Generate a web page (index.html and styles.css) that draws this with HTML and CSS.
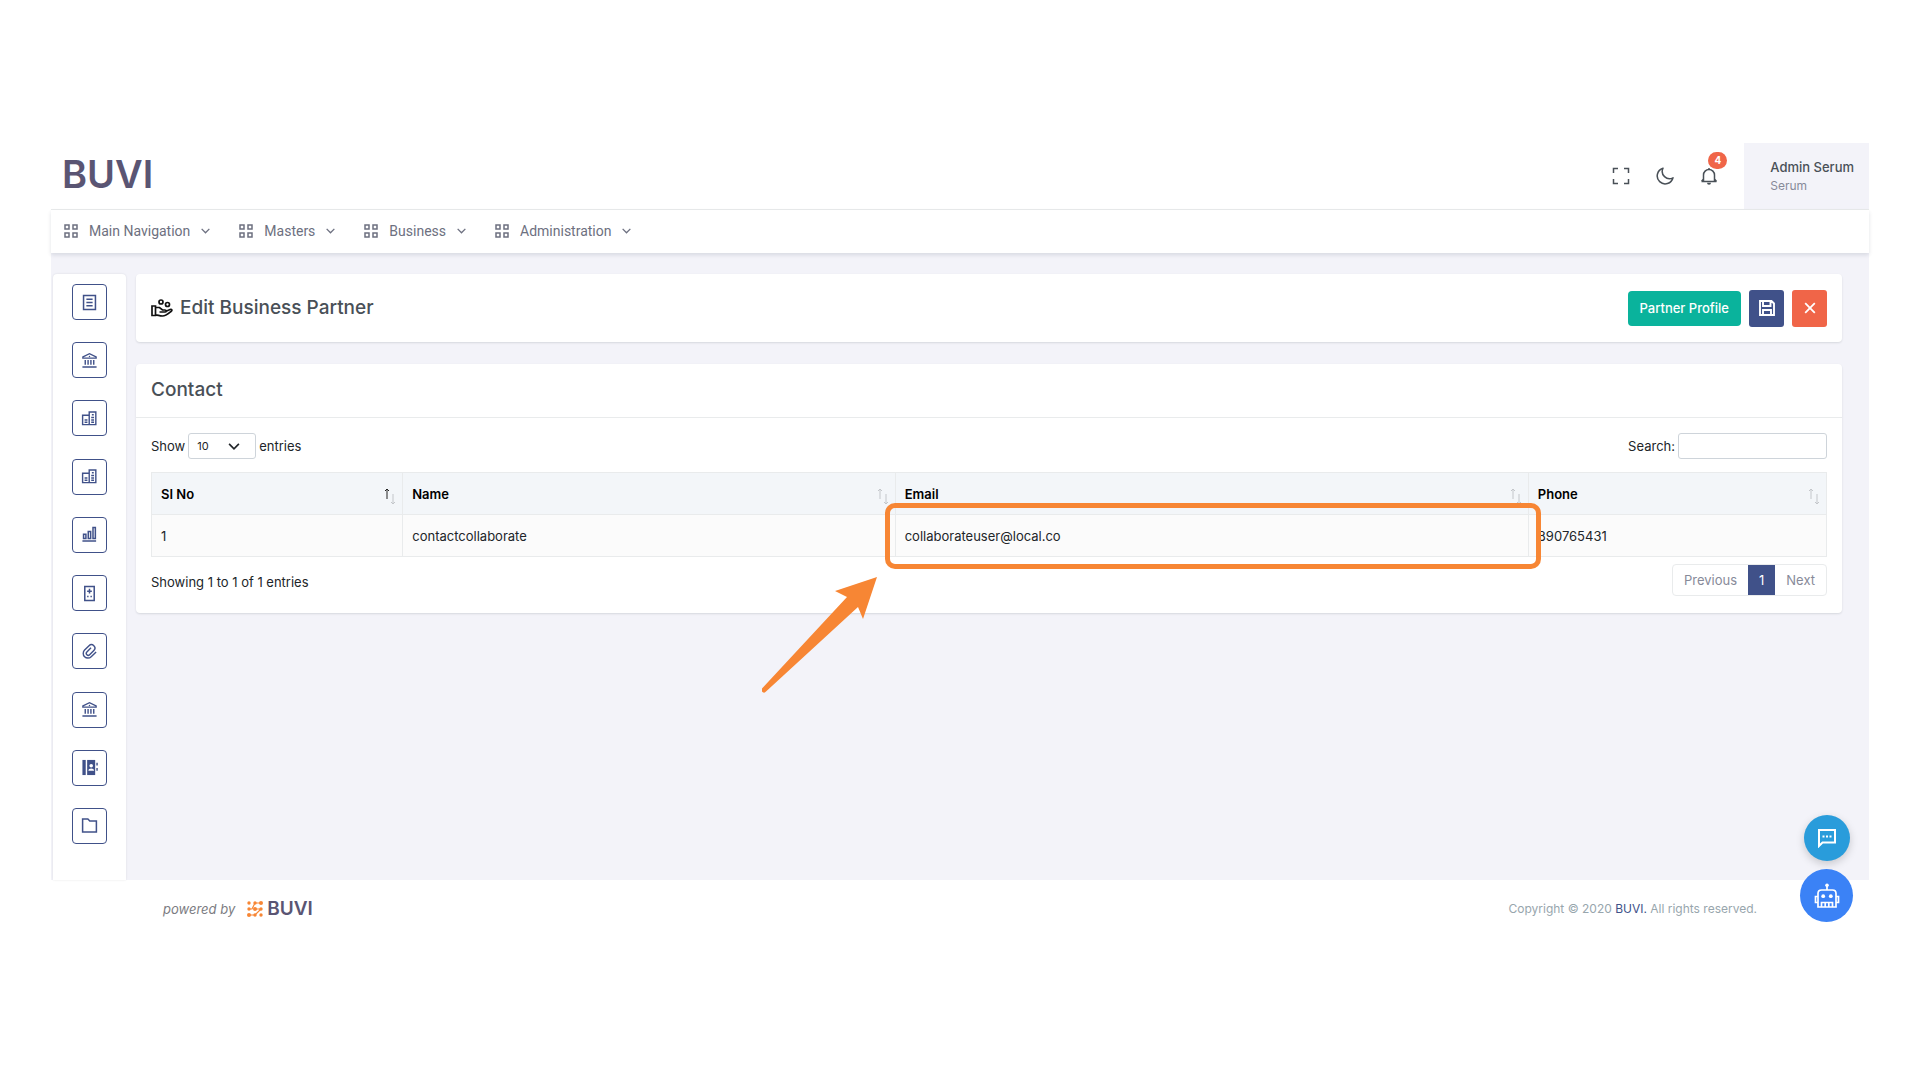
FILE: index.html
```
<!DOCTYPE html>
<html lang="en">
<head>
    <meta charset="UTF-8">
    <meta name="viewport" content="width=device-width, initial-scale=1.0">
    <title>BUVI - Edit Business Partner</title>
    <link rel="stylesheet" href="styles.css">
</head>
<body>
    <!-- shared icons -->
    <svg class="sprite" aria-hidden="true">
        <symbol id="i-grid" viewBox="0 0 14 14"><path d="M1 1h4v4H1zM9 1h4v4H9zM1 9h4v4H1zM9 9h4v4H9z" fill="none" stroke="currentColor" stroke-width="1.5"/></symbol>
        <symbol id="i-down" viewBox="0 0 10 10"><path d="M1.5 3.5L5 7l3.500-3.500" fill="none" stroke="currentColor" stroke-width="1.200"/></symbol>
        <symbol id="i-bank" viewBox="0 0 18 18"><path d="M2 6.500V5.200L9 1.800l7 3.400v1.300zM4.500 8.500v5M7.500 8.500v5M10.500 8.500v5M13.500 8.500v5M1.500 15.800h15" fill="none" stroke="currentColor" stroke-width="1.500"/><circle cx="9" cy="4.800" r=".8" fill="currentColor"/></symbol>
        <symbol id="i-building" viewBox="0 0 18 18"><path d="M1.700 15.500V5.500h7v10zM8.700 15.500V2.200h7v13.300zM3.800 10.500h3M3.800 13h3M10.800 8h3M10.800 10.500h3M10.800 13h3M11.500 5h2" fill="none" stroke="currentColor" stroke-width="1.500"/></symbol>
        <symbol id="i-sort" viewBox="0 0 12 18"><path class="up" d="M3 12V2M1 4l2-2 2 2" /><path class="dn" d="M9 7v10M7 15l2 2 2-2"/></symbol>
    </svg>

    <div class="app">
        <header class="topbar">
            <a class="logo" href="#">BUVI</a>
            <div class="topbar-right">
                <button class="icon-btn" aria-label="Fullscreen">
                    <svg viewBox="0 0 18 18"><path d="M1.500 6V1.500H6M12 1.500h4.500V6M16.500 12v4.500H12M6 16.500H1.500V12" fill="none" stroke="currentColor" stroke-width="1.500"/></svg>
                </button>
                <button class="icon-btn" aria-label="Dark mode">
                    <svg viewBox="0 0 18 18"><path d="M7 1.200A8 8 0 1 0 17 10.800 7.300 7.300 0 0 1 7 1.200z" fill="none" stroke="currentColor" stroke-width="1.500" stroke-linejoin="round"/></svg>
                </button>
                <button class="icon-btn" aria-label="Notifications">
                    <svg viewBox="0 0 18 18"><path d="M1.500 14.500h15M3.500 14V8a5.500 5.500 0 0 1 11 0v6M1.500 14.500l2-2.500M16.500 14.500l-2-2.500M9 1v1.500" fill="none" stroke="currentColor" stroke-width="1.500"/><path d="M7 15.800h4a2 2 0 0 1-4 0z" fill="currentColor"/></svg>
                    <span class="badge">4</span>
                </button>
                <div class="user">
                    <span class="user-name">Admin Serum</span>
                    <span class="user-role">Serum</span>
                </div>
            </div>
        </header>

        <nav class="navbar">
            <a href="#"><svg class="grid"><use href="#i-grid"/></svg>Main Navigation<svg class="down"><use href="#i-down"/></svg></a>
            <a href="#"><svg class="grid"><use href="#i-grid"/></svg>Masters<svg class="down"><use href="#i-down"/></svg></a>
            <a href="#"><svg class="grid"><use href="#i-grid"/></svg>Business<svg class="down"><use href="#i-down"/></svg></a>
            <a href="#"><svg class="grid"><use href="#i-grid"/></svg>Administration<svg class="down"><use href="#i-down"/></svg></a>
        </nav>

        <div class="page">
            <aside class="sidebar">
                <button aria-label="Details"><svg viewBox="0 0 18 18"><path d="M2.700 1.700h12.600v14.600H2.700zM5.700 5.500h6.600M5.700 9h6.600M5.700 12.500h6.600" fill="none" stroke="currentColor" stroke-width="1.600"/></svg></button>
                <button aria-label="Bank"><svg><use href="#i-bank"/></svg></button>
                <button aria-label="Company"><svg><use href="#i-building"/></svg></button>
                <button aria-label="Branch"><svg><use href="#i-building"/></svg></button>
                <button aria-label="Statistics"><svg viewBox="0 0 18 18"><path d="M2.700 8.700h2.500v4.600H2.700zM7.700 5.700h2.500v7.600H7.700zM12.700 1.700h2.500v11.600h-2.500zM1.500 16h14.500" fill="none" stroke="currentColor" stroke-width="1.600"/></svg></button>
                <button aria-label="Tax"><svg viewBox="0 0 18 18"><path d="M4 1.700h10v14.600H4zM9 4v5M6.500 6.500h5M6.500 12.300h1.500M10 12.300h1.500" fill="none" stroke="currentColor" stroke-width="1.600"/></svg></button>
                <button aria-label="Attachments"><svg viewBox="0 0 18 18"><path d="M16 9.500l-5.200 5a4.900 4.900 0 0 1-7-7l4.700-4.700a3.600 3.600 0 0 1 5.100 5.100l-4.500 4.500a2 2 0 0 1-2.900-2.900l4.400-4.400" fill="none" stroke="currentColor" stroke-width="1.500"/></svg></button>
                <button aria-label="Bank accounts"><svg><use href="#i-bank"/></svg></button>
                <button aria-label="Contacts"><svg viewBox="0 0 18 18"><path d="M1.500 1h3.500v16H1.500z" fill="currentColor"/><path d="M6.500 1H15v16H6.500z" fill="currentColor"/><path d="M17 4v3M17 9.500v3" stroke="currentColor" stroke-width="1.500"/><circle cx="10.800" cy="7.200" r="1.900" fill="#fff"/><path d="M7.800 12.500c0-3.400 6-3.400 6 0z" fill="#fff"/></svg></button>
                <button aria-label="Documents"><svg viewBox="0 0 18 18"><path d="M1.700 2.200h5.600l2 2h7v11.600H1.700z" fill="none" stroke="currentColor" stroke-width="1.600"/></svg></button>
            </aside>

            <main class="content">
                <section class="card title-card">
                    <h1>
                        <svg viewBox="0 0 22 18"><g fill="none" stroke="currentColor" stroke-width="1.700"><circle cx="10" cy="3" r="2"/><circle cx="16.500" cy="5.500" r="2"/><path d="M1 7h3.500v9.500H1zM4.500 8.500h4l3 2.500h2.500c1.500 0 1.500 2 0 2H8.500M14.500 12.500l4.500-2c2-.5 2.500 1 1 2-3 2.500-5 4.500-8.500 4.500-3.500 0-4-1-7-1.200"/></g></svg>
                        Edit Business Partner
                    </h1>
                    <div class="actions">
                        <button class="btn btn-green">Partner Profile</button>
                        <button class="btn btn-icon btn-blue" aria-label="Save"><svg viewBox="0 0 16 16"><path d="M1 1h11.500L15 3.500V15H1zM4 1v5h7.500V1M4 15v-5h8v5" fill="none" stroke="currentColor" stroke-width="1.900"/></svg></button>
                        <button class="btn btn-icon btn-red" aria-label="Close"><svg viewBox="0 0 16 16"><path d="M3.200 3.200l9.600 9.600M12.800 3.200l-9.600 9.600" stroke="currentColor" stroke-width="1.800"/></svg></button>
                    </div>
                </section>

                <section class="card">
                    <h2>Contact</h2>
                    <div class="card-body">
                        <div class="table-tools">
                            <div class="field">
                                <label for="length">Show</label>
                                <span class="select-wrap">
                                    <select id="length"><option>10</option><option>25</option><option>50</option></select>
                                    <svg><use href="#i-down"/></svg>
                                </span>
                                <span>entries</span>
                            </div>
                            <div class="field">
                                <label for="search">Search:</label>
                                <input id="search" type="search">
                            </div>
                        </div>
                        <table>
                            <thead>
                                <tr>
                                    <th class="col-no asc"><div>SI No<svg><use href="#i-sort"/></svg></div></th>
                                    <th class="col-name"><div>Name<svg><use href="#i-sort"/></svg></div></th>
                                    <th class="col-email"><div>Email<svg><use href="#i-sort"/></svg></div></th>
                                    <th class="col-phone"><div>Phone<svg><use href="#i-sort"/></svg></div></th>
                                </tr>
                            </thead>
                            <tbody>
                                <tr>
                                    <td>1</td>
                                    <td>contactcollaborate</td>
                                    <td class="marked">
                                        collaborateuser@local.co
                                        <span class="highlight"></span>
                                        <svg class="arrow" viewBox="0 0 116 118"><path d="M115 0L101 42 96 30 4 114.500A2.300 2.300 0 0 1 0 111.500L85 20 73 14z" fill="#f78634"/></svg>
                                    </td>
                                    <td>890765431</td>
                                </tr>
                            </tbody>
                        </table>
                        <div class="table-foot">
                            <span>Showing 1 to 1 of 1 entries</span>
                            <div class="pagination">
                                <button>Previous</button>
                                <button class="active">1</button>
                                <button>Next</button>
                            </div>
                        </div>
                    </div>
                </section>
            </main>
        </div>

        <footer class="footer">
            <div class="powered">
                <em>powered by</em>
                <svg viewBox="0 0 16 16"><g fill="#f78634"><circle cx="2" cy="2" r="1.700"/><circle cx="8" cy="2" r="1.700"/><circle cx="14" cy="2" r="2"/><circle cx="2" cy="8" r="1.700"/><circle cx="8" cy="8" r="2"/><circle cx="14" cy="8" r="1.700"/><circle cx="2" cy="14" r="2"/><circle cx="8" cy="14" r="1.700"/><circle cx="14" cy="14" r="1.700"/></g><path d="M8 2h6M2 8h3l3-6M2 14h6l6-6M8 8h6" stroke="#f78634" stroke-width="1.200" fill="none"/></svg>
                <strong>BUVI</strong>
            </div>
            <p>Copyright © 2020 <a href="#">BUVI.</a> All rights reserved.</p>
        </footer>

        <div class="floating">
            <button class="chat" aria-label="Chat"><svg viewBox="0 0 20 20"><path d="M2 18V2h16v12.500H5.500z" fill="none" stroke="currentColor" stroke-width="2"/><path d="M5.500 7.500h2v2h-2zM9 7.500h2v2H9zM12.500 7.500h2v2h-2z" fill="currentColor"/></svg></button>
            <button class="bot" aria-label="Assistant"><svg viewBox="0 0 26 26"><path d="M4 24V10.500C4 8.500 5.500 7 7.500 7h11c2 0 3.500 1.500 3.500 3.500V24zM13 7V3M4 13.500H1.500v6H4M22 13.500h2.500v6H22M7.500 24v-4.500h11V24M11.200 20v3.500M14.800 20v3.500" fill="none" stroke="currentColor" stroke-width="1.700"/><circle cx="13" cy="2.300" r="1.800" fill="currentColor"/><circle cx="9.200" cy="13.200" r="1.900" fill="currentColor"/><circle cx="16.800" cy="13.200" r="1.900" fill="currentColor"/></svg></button>
        </div>
    </div>
</body>
</html>
```

FILE: styles.css
```
* {
    box-sizing: border-box;
}
body {
    margin: 0;
    background: #fff;
    color: #212529;
    font-family: Inter, "Noto Sans", sans-serif;
    font-size: 13px;
    line-height: 20px;
}
button, input, select {
    font: inherit;
    color: inherit;
}
button {
    padding: 0;
    border: none;
    background: none;
    cursor: pointer;
}
svg {
    display: block;
    flex: none;
}
a {
    text-decoration: none;
}
.sprite {
    position: absolute;
    width: 0;
    height: 0;
}
.app {
    position: relative;
    margin: 143px 51px;
}

/* top bar */
.topbar {
    display: flex;
    align-items: center;
    justify-content: space-between;
    height: 67px;
    padding-left: 11px;
    border-bottom: 1px solid #e9ebec;
}
.logo {
    padding-bottom: 4px;
    color: #5a5573;
    font-size: 38px;
    font-weight: 600;
    line-height: 40px;
}
.topbar-right {
    display: flex;
    align-items: center;
    align-self: stretch;
    gap: 26px;
}
.icon-btn {
    position: relative;
    color: #495057;
}
.icon-btn svg {
    width: 18px;
    height: 18px;
}
.badge {
    position: absolute;
    top: -15px;
    left: 8px;
    width: 19px;
    border-radius: 9px;
    background: #f06548;
    color: #fff;
    font-size: 10px;
    font-weight: 700;
    line-height: 17px;
}
.user {
    display: flex;
    flex-direction: column;
    justify-content: center;
    align-self: stretch;
    padding: 0 15px 0 26px;
    background: #f3f3f9;
}
.user-name {
    color: #495057;
    font-weight: 500;
    line-height: 19px;
}
.user-role {
    color: #878a99;
    font-size: 12px;
    line-height: 18px;
}

/* navigation */
.navbar {
    position: relative;
    display: flex;
    align-items: center;
    gap: 28px;
    height: 43px;
    padding: 0 13px 2px;
    background: #fff;
    box-shadow: 0 2px 4px rgba(15, 34, 58, .12);
}
.navbar a {
    display: flex;
    align-items: center;
    color: #6d7080;
    font-family: Roboto, sans-serif;
    font-size: 14px;
}
.navbar .grid {
    width: 14px;
    height: 14px;
    margin-right: 11px;
}
.navbar .down {
    width: 11px;
    height: 11px;
    margin-left: 10px;
}

/* page */
.page {
    display: flex;
    gap: 10px;
    min-height: 627px;
    padding: 21px 27px 0 2px;
    background: #f3f3f9;
}
.sidebar {
    display: flex;
    flex-direction: column;
    align-items: center;
    justify-content: space-between;
    flex: none;
    width: 73px;
    padding: 10px 0 36px;
    border-radius: 4px 4px 0 0;
    background: #fff;
    box-shadow: 0 0 2px rgba(56, 65, 74, .15);
}
.sidebar button {
    display: flex;
    align-items: center;
    justify-content: center;
    width: 35px;
    height: 36px;
    border: 1px solid #405189;
    border-radius: 4px;
    color: #405189;
}
.sidebar svg {
    width: 17px;
    height: 17px;
}
.content {
    flex: 1;
    min-width: 0;
}
.card {
    margin-bottom: 22px;
    border-radius: 4px;
    background: #fff;
    box-shadow: 0 1px 2px rgba(56, 65, 74, .15);
}
.title-card {
    display: flex;
    align-items: center;
    justify-content: space-between;
    height: 68px;
    padding: 0 15px;
}
h1, h2 {
    margin: 0;
    color: #495057;
    font-size: 19px;
    font-weight: 500;
}
h1 {
    display: flex;
    align-items: center;
    gap: 7px;
}
h1 svg {
    width: 22px;
    height: 18px;
    color: #111;
}
h2 {
    padding: 16px 15px 17px;
    border-bottom: 1px solid #e9ebec;
}
.actions {
    display: flex;
    align-items: center;
    gap: 8px;
}
.btn {
    height: 35px;
    padding: 0 12px;
    border-radius: 4px;
    color: #fff;
    font-size: 13px;
    font-weight: 500;
}
.btn-icon {
    display: flex;
    align-items: center;
    justify-content: center;
    width: 35px;
    height: 37px;
    padding: 0;
    border-radius: 3px;
}
.btn-icon svg {
    width: 16px;
    height: 16px;
}
.btn-green {
    background: #0ab39c;
}
.btn-blue {
    background: #405189;
}
.btn-red {
    background: #f06548;
}

/* table */
.card-body {
    padding: 15px 15px 17px;
}
.table-tools, .table-foot {
    display: flex;
    justify-content: space-between;
}
.table-tools {
    margin-bottom: 13px;
}
.field {
    display: flex;
    align-items: center;
    gap: 3px;
}
.select-wrap {
    position: relative;
}
.field select, .field input {
    display: block;
    height: 26px;
    border: 1px solid #ced4da;
    border-radius: 3px;
    background: #fff;
}
.field select {
    width: 68px;
    padding: 0 8px;
    appearance: none;
    font-size: 11px;
}
.select-wrap svg {
    position: absolute;
    top: 6px;
    right: 15px;
    width: 14px;
    height: 14px;
    pointer-events: none;
}
.field input {
    width: 149px;
}
table {
    width: 100%;
    border-collapse: collapse;
    table-layout: fixed;
}
th, td {
    height: 42px;
    padding: 0 9px;
    border: 1px solid #e9ebec;
    text-align: left;
}
th {
    padding-right: 6px;
    background: #f3f6f9;
    color: #000;
    font-weight: 600;
}
th div {
    display: flex;
    align-items: center;
    justify-content: space-between;
}
th svg {
    width: 12px;
    height: 18px;
    margin-top: 4px;
    color: #c3c6ca;
    fill: none;
    stroke: #c3c6ca;
}
.asc svg {
    color: #222;
}
.up {
    stroke: currentColor;
}
td {
    background: #fbfbfb;
}
.col-no {
    width: 15%;
}
.col-name {
    width: 29.4%;
}
.col-email {
    width: 37.8%;
}
.marked {
    position: relative;
}
.highlight {
    position: absolute;
    inset: -12px -13px -13px -11px;
    border: 5px solid #f78634;
    border-radius: 10px;
}
.arrow {
    position: absolute;
    top: 62px;
    left: -134px;
    width: 116px;
    height: 118px;
}
.table-foot {
    padding-top: 7px;
}
.table-foot > span {
    padding-top: 8px;
}
.pagination {
    display: flex;
    border: 1px solid #e9ebec;
    border-radius: 4px;
}
.pagination button {
    height: 30px;
    padding: 0 11px;
    color: #878a99;
}
.pagination .active {
    background: #405189;
    color: #fff;
}

/* footer */
.footer {
    display: flex;
    align-items: center;
    justify-content: space-between;
    height: 57px;
    padding: 0 112px;
    color: #98a6ad;
}
.powered {
    display: flex;
    align-items: center;
    color: #7c7c82;
}
.powered svg {
    width: 16px;
    height: 16px;
    margin: 0 4px 0 12px;
}
.powered strong {
    color: #5a5573;
    font-size: 19px;
    font-weight: 600;
}
.footer p {
    font-size: 12px;
}
.footer a {
    color: #405189;
}

/* floating buttons */
.floating {
    position: absolute;
    right: 16px;
    bottom: 15px;
    display: flex;
    flex-direction: column;
    align-items: center;
    gap: 8px;
}
.floating button {
    display: flex;
    align-items: center;
    justify-content: center;
    border-radius: 50%;
    color: #fff;
}
.chat {
    width: 46px;
    height: 46px;
    background: #299cdb;
    box-shadow: 0 3px 8px rgba(0, 0, 0, .18);
}
.chat svg {
    width: 20px;
    height: 20px;
}
.bot {
    width: 53px;
    height: 53px;
    background: #3b82f6;
}
.bot svg {
    width: 26px;
    height: 26px;
}
```
